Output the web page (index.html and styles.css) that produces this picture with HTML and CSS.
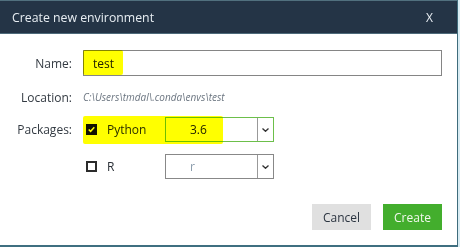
FILE: index.html
```html
<!DOCTYPE html>
<html lang="en">
<head>
  <meta charset="UTF-8">
  <title>Create new environment</title>
  <link rel="stylesheet" href="styles.css">
</head>
<body>

<div class="dialog">
  <!-- Title bar -->
  <div class="titlebar">
    <span class="title">Create new environment</span>
    <span class="close">X</span>
  </div>

  <div class="body">
    <div class="row row-name">
      <label class="label">Name:</label>
      <input class="text-input" type="text" value="test">
    </div>

    <div class="row row-location">
      <span class="label">Location:</span>
      <span class="path">C:\Users\tmdal\.conda\envs\test</span>
    </div>

    <div class="row row-pkg">
      <span class="label">Packages:</span>
      <div class="pkg">
        <span class="check checked">
          <svg width="8" height="7" viewBox="0 0 8 7"><path d="M0.8 3.4 L3 5.6 L7.2 1" fill="none" stroke="#fff" stroke-width="1.7"/></svg>
        </span>
        <span class="pkg-name">Python</span>
      </div>
      <div class="select active">
        <span class="select-value">3.6</span>
        <span class="select-arrow"><svg width="7" height="4" viewBox="0 0 7 4"><path d="M0.5 0.5 L3.5 3.3 L6.5 0.5" fill="none" stroke="#333" stroke-width="1.3"/></svg></span>
      </div>
    </div>

    <div class="row row-r">
      <span class="label"></span>
      <div class="pkg">
        <span class="check"></span>
        <span class="pkg-name">R</span>
      </div>
      <div class="select">
        <span class="select-value muted">r</span>
        <span class="select-arrow"><svg width="7" height="4" viewBox="0 0 7 4"><path d="M0.5 0.5 L3.5 3.3 L6.5 0.5" fill="none" stroke="#333" stroke-width="1.3"/></svg></span>
      </div>
    </div>

    <div class="actions">
      <button class="btn btn-cancel">Cancel</button>
      <button class="btn btn-create">Create</button>
    </div>
  </div>

  <!-- marker highlights drawn over the dialog -->
  <span class="marker marker-name"></span>
  <span class="marker marker-pkg"></span>
</div>

</body>
</html>
```

FILE: styles.css
```css
* { box-sizing: border-box; }

body {
  margin: 0;
  background: #d9ecf3;
  font-family: "Open Sans", "Noto Sans", sans-serif;
}

.dialog {
  position: relative;
  width: 458px;
  height: 247px;
  background: #fff;
  border-top: 1px solid #51707e;
  border-right: 1px solid #3f6c7c;
  border-bottom: 2px solid #3f6f80;
}

.titlebar {
  display: flex;
  justify-content: space-between;
  align-items: center;
  height: 33px;
  padding: 0 24px 0 12px;
  background: #243446;
  border-bottom: 1px solid #4d6a7a;
  color: #e8eef3;
  font-size: 12.3px;
}

.close {
  font-size: 12px;
}

.body {
  padding: 16px 0 0 0;
}

.row {
  display: flex;
  align-items: center;
  gap: 11px;
}

.label {
  width: 72px;
  text-align: right;
  font-size: 12px;
  color: #333a42;
}

.row-name { height: 26px; }

.text-input {
  width: 359px;
  height: 26px;
  border: 1px solid #858585;
  padding: 0 0 0 9px;
  font-family: inherit;
  font-size: 12px;
  color: #222;
  outline: none;
}

.row-location {
  height: 22px;
  margin-top: 10px;
}

.path {
  font-size: 10px;
  font-style: italic;
  color: #6b7580;
}

.row-pkg {
  height: 25px;
  margin-top: 9px;
}

.row-r {
  height: 25px;
  margin-top: 12px;
}

.pkg {
  display: flex;
  align-items: center;
  width: 71px;
  padding-left: 3px;
  gap: 10px;
}

.check {
  display: flex;
  align-items: center;
  justify-content: center;
  width: 11px;
  height: 11px;
  border: 2px solid #2b2b2b;
  background: #fff;
}

.check.checked {
  background: #111;
  border-color: #111;
}

.pkg-name {
  font-size: 12px;
  color: #2a2f36;
}

.select {
  display: flex;
  width: 109px;
  height: 25px;
  border: 1px solid #888;
}

.select.active {
  border-color: #6cbf4a;
}

.select-value {
  flex: 1;
  display: flex;
  align-items: center;
  padding-left: 24px;
  font-size: 12px;
  color: #222;
}

.select-value.muted {
  color: #8b9cac;
}

.select-arrow {
  display: flex;
  align-items: center;
  justify-content: center;
  width: 16px;
  border-left: 1px solid #999;
}

.actions {
  display: flex;
  justify-content: flex-end;
  gap: 12px;
  margin-top: 25px;
  padding-right: 15px;
}

.btn {
  width: 59px;
  height: 26px;
  border: none;
  font-family: inherit;
  font-size: 12px;
  cursor: pointer;
}

.btn-cancel {
  background: #e0e0e0;
  color: #2b3440;
}

.btn-create {
  background: #43ae2d;
  color: #f2f7ee;
}

/* yellow marker strokes */
.marker {
  position: absolute;
  background: #ffff00;
  mix-blend-mode: multiply;
  border-radius: 2px;
}

.marker-name {
  left: 83px;
  top: 49px;
  width: 40px;
  height: 25px;
}

.marker-pkg {
  left: 83px;
  top: 115px;
  width: 140px;
  height: 28px;
}
```
